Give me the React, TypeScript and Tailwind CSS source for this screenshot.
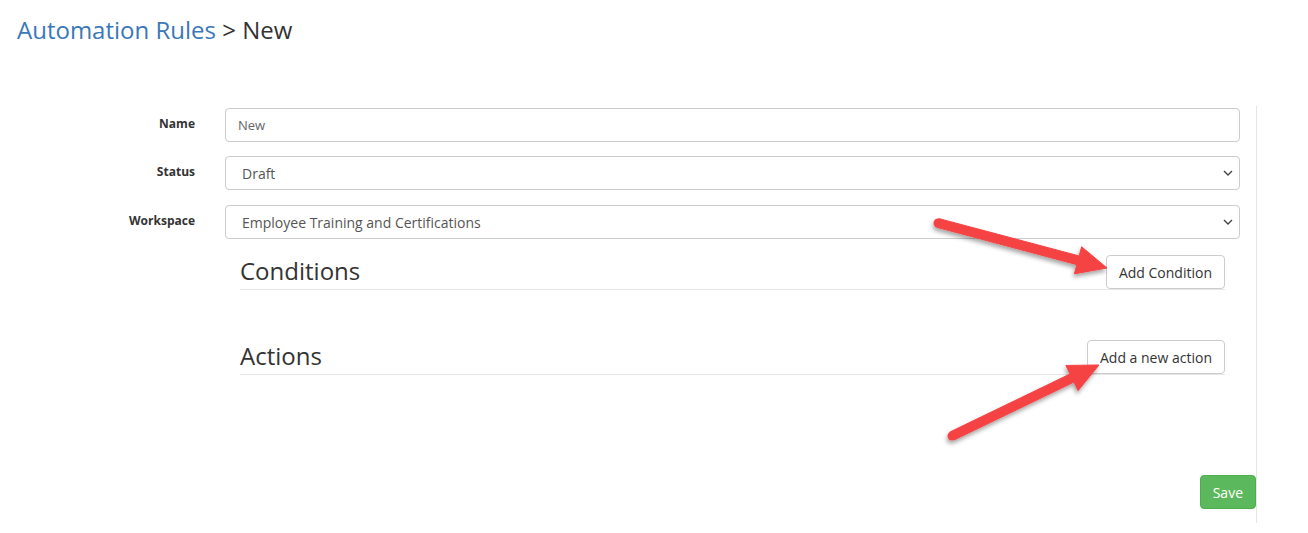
import { ReactNode } from 'react';

function Chevron() {
  return (
    <svg width="10" height="6" viewBox="0 0 10 6" className="shrink-0">
      <path d="M1 1l4 4 4-4" fill="none" stroke="#444" strokeWidth="1.4" />
    </svg>
  );
}

function Row({ label, children }: { label: string; children: ReactNode }) {
  return (
    <div className="flex items-start">
      <label className="w-[195px] shrink-0 pt-[8px] text-right text-[12px] font-bold leading-[16px] text-[#333]">
        {label}
      </label>
      <div className="ml-[30px] w-[1015px]">{children}</div>
    </div>
  );
}

function FakeSelect({ value }: { value: string }) {
  return (
    <div className="flex h-[34px] items-center justify-between rounded-[4px] border border-[#ccc] pl-[16px] pr-[6px] text-[14px] text-[#555]">
      <span>{value}</span>
      <Chevron />
    </div>
  );
}

function Section({ title, button }: { title: string; button: string }) {
  return (
    <div className="mx-[15px] flex items-end justify-between border-b border-[#e6e6e6]">
      <h3 className="mb-[5px] text-[24px] leading-[1.1] text-[#333]">{title}</h3>
      <button className="h-[34px] rounded-[4px] border border-[#ccc] bg-white px-[12px] text-[14px] text-[#333]">
        {button}
      </button>
    </div>
  );
}

// arrow polygon from tail to tip
function arrowPoints(x1: number, y1: number, x2: number, y2: number) {
  const dx = x2 - x1;
  const dy = y2 - y1;
  const len = Math.hypot(dx, dy);
  const ux = dx / len;
  const uy = dy / len;
  const nx = -uy;
  const ny = ux;
  const head = 30;
  const hw = 14;
  const sw = 4.5;
  const bx = x2 - ux * head;
  const by = y2 - uy * head;
  const pts = [
    [x1 + nx * sw, y1 + ny * sw],
    [bx + nx * sw, by + ny * sw],
    [bx + nx * hw, by + ny * hw],
    [x2, y2],
    [bx - nx * hw, by - ny * hw],
    [bx - nx * sw, by - ny * sw],
    [x1 - nx * sw, y1 - ny * sw],
  ];
  return pts.map(p => p.join(',')).join(' ');
}

export default function App() {
  return (
    <div className="relative min-h-screen bg-white font-['Open_Sans',sans-serif]">
      <h1 className="pl-[17px] pt-[17px] text-[24px] leading-[1.1] text-[#333]">
        <span className="text-[#3a78b8]">Automation Rules</span> &gt; New
      </h1>

      <div className="mt-[63px] w-[1257px] border-r border-[#e5e5e5] pt-[2px] pb-[14px]">
        <Row label="Name">
          <div className="flex h-[34px] items-center rounded-[4px] border border-[#ccc] px-[12px] text-[13px] text-[#666]">
            New
          </div>
        </Row>
        <div className="mt-[14px]">
          <Row label="Status">
            <FakeSelect value="Draft" />
          </Row>
        </div>
        <div className="mt-[15px]">
          <Row label="Workspace">
            <FakeSelect value="Employee Training and Certifications" />
          </Row>
        </div>

        <div className="ml-[225px] w-[1015px]">
          <div className="mt-[16px]">
            <Section title="Conditions" button="Add Condition" />
          </div>
          <div className="mt-[50px]">
            <Section title="Actions" button="Add a new action" />
          </div>
        </div>

        <div className="mt-[100px] flex justify-end">
          <button className="h-[34px] rounded-[4px] border border-[#4cae4c] bg-[#5cb85c] px-[12px] text-[14px] text-white">
            Save
          </button>
        </div>
      </div>

      <svg className="pointer-events-none absolute left-0 top-0" width="1308" height="533">
        <defs>
          <filter id="sh" x="-20%" y="-50%" width="140%" height="200%">
            <feDropShadow dx="-1" dy="3" stdDeviation="2" floodColor="#000" floodOpacity="0.35" />
          </filter>
        </defs>
        <g filter="url(#sh)" fill="#f54343" stroke="#f54343" strokeLinejoin="round">
          <polygon points={arrowPoints(938, 223, 1107, 268)} strokeWidth="1" />
          <circle cx="938" cy="223" r="4.5" stroke="none" />
          <polygon points={arrowPoints(952, 436, 1099, 365)} strokeWidth="1" />
          <circle cx="952" cy="436" r="4.5" stroke="none" />
        </g>
      </svg>
    </div>
  );
}
